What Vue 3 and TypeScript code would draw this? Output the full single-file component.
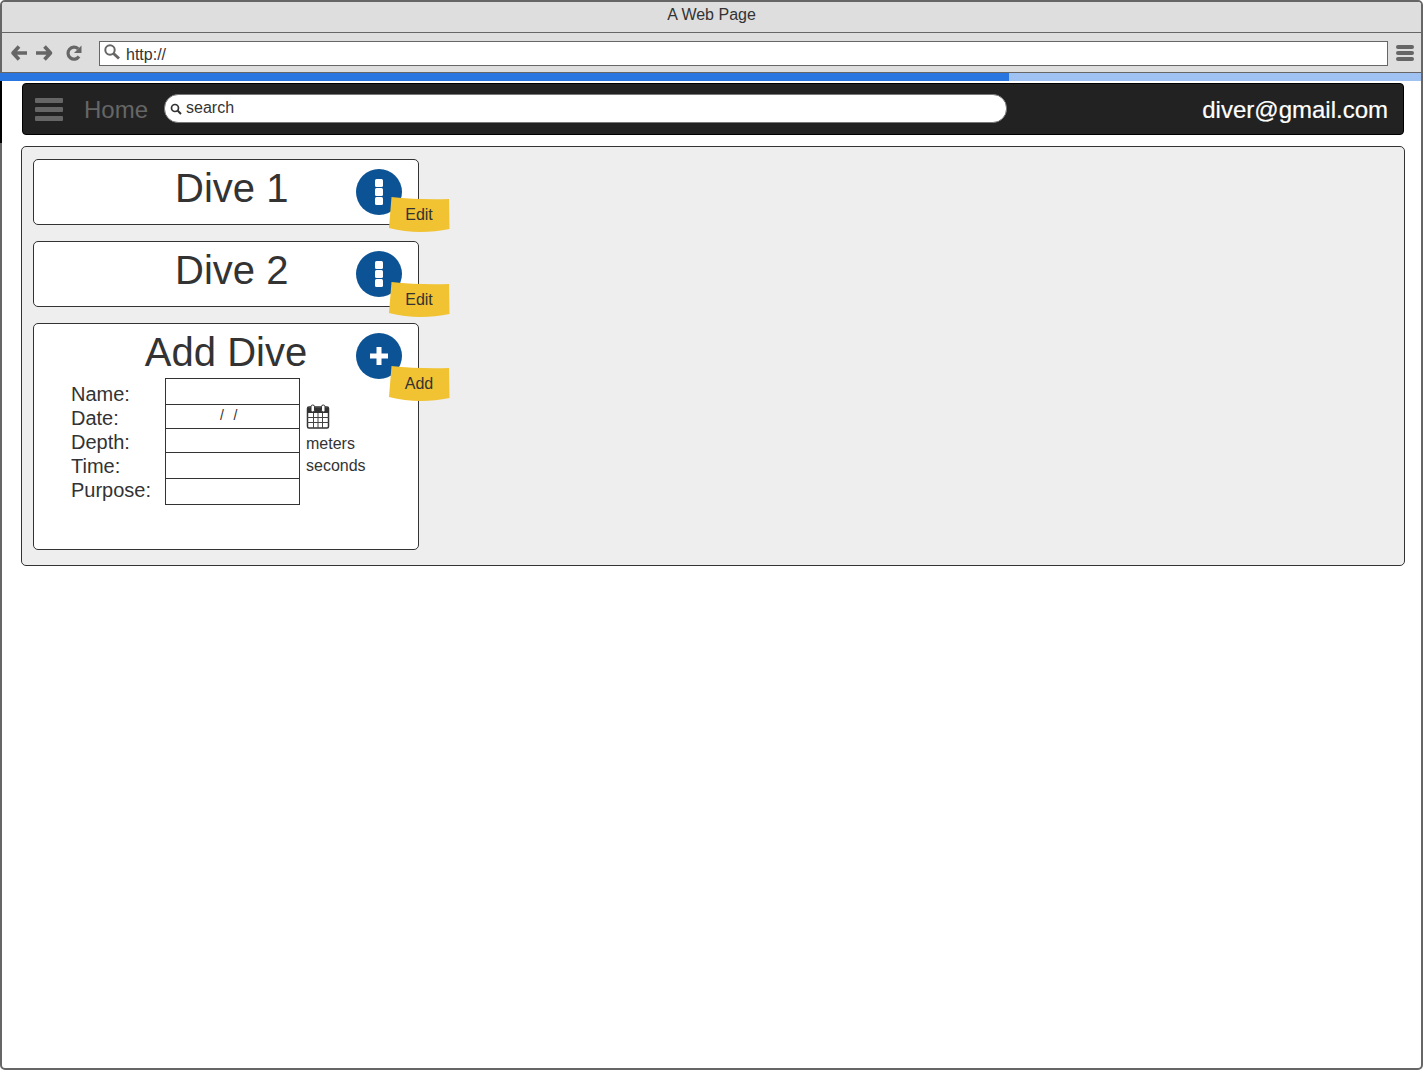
<template>
  <div class="window">
    <div class="edge"></div>
    <div class="titlebar">A Web Page</div>
    <div class="toolbar">
      <svg class="nav-icon" width="18" height="18" viewBox="0 0 18 18"><path d="M9 2.500 3 9l6 6.500M3.500 9H17" fill="none" stroke="#666" stroke-width="3.600" stroke-linejoin="round" /></svg>
      <svg class="nav-icon" width="18" height="18" viewBox="0 0 18 18"><path d="M9.500 2.500 15.500 9l-6 6.500M15 9H1" fill="none" stroke="#666" stroke-width="3.600" stroke-linejoin="round" /></svg>
      <svg class="reload" width="18" height="18" viewBox="0 0 18 18"><path d="M14 12.500A6 6 0 1 1 13.200 4.800" fill="none" stroke="#666" stroke-width="3.200" /><path d="M16.500 1.500v7.500H9z" fill="#666" /></svg>
      <div class="address">
        <svg width="18" height="18" viewBox="0 0 18 18"><circle cx="7" cy="7" r="4.700" fill="none" stroke="#666" stroke-width="2" /><path d="m10.500 10.500 5.500 5" stroke="#666" stroke-width="3" /></svg>
        <span>http://</span>
      </div>
      <div class="menu-icon"><i></i><i></i><i></i></div>
    </div>
    <div class="progress"><div class="progress-fill"></div></div>

    <div class="content">
      <nav class="navbar">
        <div class="burger"><i></i><i></i><i></i></div>
        <span class="home">Home</span>
        <div class="search">
          <svg width="12" height="12" viewBox="0 0 12 12"><circle cx="5" cy="5" r="3.500" fill="none" stroke="#333" stroke-width="1.700" /><path d="m7.500 7.500 3.500 3.500" stroke="#333" stroke-width="2" /></svg>
          <span>search</span>
        </div>
        <span class="email">diver@gmail.com</span>
      </nav>

      <main class="panel">
        <section v-for="dive in dives" :key="dive.name" class="card">
          <h2 class="dive-title">{{ dive.name }}</h2>
          <div class="round-btn">
            <span class="dots"><i></i><i></i><i></i></span>
          </div>
          <div class="note" :style="{ top: dive.noteTop + 'px' }">
            <svg width="61" height="35" viewBox="0 0 61 35"><path d="M2.500 0C20 2 40 2.500 60 2L60.500 32C40 36 20 36 0 31z" fill="#f1c232" /></svg>
            <span>Edit</span>
          </div>
        </section>

        <section class="card card-add">
          <h2 class="add-title">Add Dive</h2>
          <div class="round-btn">
            <svg width="22" height="22" viewBox="0 0 22 22"><path d="M11 2v18M2 11h18" stroke="#fff" stroke-width="5" stroke-linejoin="round" /></svg>
          </div>
          <div class="note note-add">
            <svg width="61" height="35" viewBox="0 0 61 35"><path d="M2.500 0C20 2 40 2.500 60 2L60.500 32C40 36 20 36 0 31z" fill="#f1c232" /></svg>
            <span>Add</span>
          </div>
          <div class="form">
            <div class="labels">
              <div v-for="label in labels" :key="label">{{ label }}</div>
            </div>
            <div class="inputs">
              <div class="field f-name"></div>
              <div class="field f-date">/&nbsp;&nbsp;&nbsp;/</div>
              <div class="field f-depth"></div>
              <div class="field f-time"></div>
              <div class="field f-purpose"></div>
            </div>
            <div class="units">
              <svg width="24" height="25" viewBox="0 0 24 25">
                <rect x="1.500" y="3" width="21" height="21" rx="1.500" fill="#fff" stroke="#333" stroke-width="1.500" />
                <path d="M1.500 3.500h21V9h-21z" fill="#333" />
                <path d="M7.500 9v15M12 9v15M16.500 9v15M1 13.500h22M1 18.500h22" stroke="#444" />
                <rect x="5" y="1" width="3.500" height="7" rx="1.700" fill="#fff" stroke="#333" />
                <rect x="15.500" y="1" width="3.500" height="7" rx="1.700" fill="#fff" stroke="#333" />
              </svg>
              <div class="unit-meters">meters</div>
              <div class="unit-seconds">seconds</div>
            </div>
          </div>
        </section>
      </main>
    </div>
  </div>
</template>

<script setup lang="ts">
interface IDive {
  name: string;
  noteTop: number;
}

const dives: IDive[] = [
  { name: "Dive 1", noteTop: 37 },
  { name: "Dive 2", noteTop: 40 },
];

const labels: string[] = ["Name:", "Date:", "Depth:", "Time:", "Purpose:"];
</script>

<style>
html,
body {
  margin: 0;
  background: #fff;
  overflow: hidden;
}
</style>

<style scoped>
.window {
  box-sizing: border-box;
  position: relative;
  width: 1423px;
  height: 1070px;
  border: 2px solid #666;
  border-radius: 5px;
  background: #fff;
  font-family: "Liberation Sans", Arial, sans-serif;
  color: #333;
}
.edge {
  position: absolute;
  left: -2px;
  top: 79px;
  width: 2px;
  height: 62px;
  background: #000;
}
.titlebar {
  box-sizing: border-box;
  height: 31px;
  padding-top: 3px;
  background: #dedede;
  border-bottom: 1px solid #666;
  border-radius: 3px 3px 0 0;
  font-size: 16px;
  line-height: 19px;
  text-align: center;
}
.toolbar {
  box-sizing: border-box;
  height: 40px;
  display: flex;
  align-items: center;
  padding: 0 0 0 8px;
  background: #dedede;
  border-bottom: 1px solid #666;
}
.nav-icon {
  margin-right: 7px;
}
.reload {
  margin-left: 5px;
  margin-right: 16px;
}
.address {
  box-sizing: border-box;
  width: 1289px;
  height: 25px;
  margin-top: 1px;
  display: flex;
  align-items: center;
  gap: 5px;
  padding-left: 3px;
  background: #fff;
  border: 1px solid #666;
  font-size: 16px;
}
.address svg {
  margin-top: -3px;
}
.address span {
  margin-top: 4px;
}
.menu-icon {
  margin-left: 8px;
  margin-top: 1px;
  width: 18px;
  display: flex;
  flex-direction: column;
  gap: 2px;
}
.menu-icon i {
  display: block;
  height: 4px;
  border-radius: 2px;
  background: #666;
}
.progress {
  height: 8px;
  margin-left: -2px;
  background: #a0c2f2;
}
.progress-fill {
  width: 1009px;
  height: 8px;
  background: #2a76e0;
}
.content {
  box-sizing: border-box;
  padding: 2px 16px 0 19px;
}
.navbar {
  box-sizing: border-box;
  height: 52px;
  margin-left: 1px;
  margin-right: 1px;
  display: flex;
  align-items: center;
  padding: 0 15px 0 12px;
  background: #222;
  border: 1px solid #000;
  border-radius: 4px;
}
.burger {
  width: 28px;
  display: flex;
  flex-direction: column;
  gap: 4px;
}
.burger i {
  display: block;
  height: 5px;
  border-radius: 1px;
  background: #666;
}
.home {
  margin-left: 21px;
  margin-top: 2px;
  font-size: 24px;
  color: #666;
}
.search {
  box-sizing: border-box;
  width: 843px;
  height: 29px;
  margin-left: 16px;
  margin-top: -2px;
  display: flex;
  align-items: center;
  gap: 4px;
  padding: 0 0 0 5px;
  background: #fff;
  border: 1px solid #777;
  border-radius: 14px;
  font-size: 16px;
}
.search svg {
  margin-top: 1px;
}
.email {
  margin-left: auto;
  margin-top: 2px;
  font-size: 24px;
  color: #fff;
  -webkit-text-stroke: 0.2px #fff;
}
.panel {
  box-sizing: border-box;
  height: 420px;
  margin-top: 11px;
  display: flex;
  flex-direction: column;
  gap: 16px;
  padding: 12px 11px;
  background: #eee;
  border: 1px solid #333;
  border-radius: 5px;
}
.card {
  box-sizing: border-box;
  position: relative;
  width: 386px;
  height: 66px;
  flex: none;
  background: #fff;
  border: 1px solid #333;
  border-radius: 5px;
}
.card-add {
  height: 227px;
}
.dive-title,
.add-title {
  margin: 0;
  font-size: 40px;
  font-weight: 400;
  line-height: 46px;
  padding-top: 5px;
}
.dive-title {
  padding-left: 141px;
}
.add-title {
  text-align: center;
}
.round-btn {
  position: absolute;
  top: 9px;
  left: 322px;
  width: 46px;
  height: 46px;
  display: flex;
  align-items: center;
  justify-content: center;
  border-radius: 50%;
  background: #0b5394;
}
.dots {
  display: flex;
  flex-direction: column;
  gap: 1px;
}
.dots i {
  display: block;
  width: 8px;
  height: 8px;
  border-radius: 1.500px;
  background: #fff;
}
.note {
  position: absolute;
  left: 355px;
  width: 60px;
  height: 35px;
  font-size: 16px;
  line-height: 35px;
  text-align: center;
}
.note-add {
  top: 42px;
}
.note svg {
  position: absolute;
  left: 0;
  top: 0;
}
.note span {
  position: relative;
}
.form {
  display: flex;
  margin-top: 3px;
  margin-left: 37px;
}
.labels {
  width: 94px;
  padding-top: 4px;
  font-size: 20px;
  line-height: 24px;
}
.inputs {
  width: 135px;
  box-sizing: border-box;
}
.field {
  box-sizing: border-box;
  border: 1px solid #333;
  margin-top: -1px;
  padding-right: 8px;
  font-size: 14px;
  line-height: 20px;
  letter-spacing: -0.5px;
  text-align: center;
}
.f-name,
.f-time,
.f-purpose {
  height: 27px;
}
.f-name {
  margin-top: 0;
}
.f-date,
.f-depth {
  height: 25px;
}
.units {
  margin-left: 6px;
  font-size: 16px;
  line-height: 22px;
}
.units svg {
  display: block;
  margin-top: 26px;
}
.unit-meters {
  margin-top: 4px;
}
</style>
